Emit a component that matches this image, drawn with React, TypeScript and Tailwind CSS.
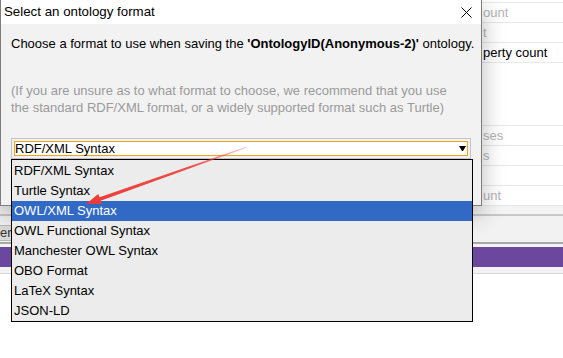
import React from "react";

const formats = [
  "RDF/XML Syntax",
  "Turtle Syntax",
  "OWL/XML Syntax",
  "OWL Functional Syntax",
  "Manchester OWL Syntax",
  "OBO Format",
  "LaTeX Syntax",
  "JSON-LD",
];

const Row = ({ text, dim }: { text?: string; dim?: boolean }) => (
  <div
    className={
      "h-[20px] border-b border-[#e8e8e8] pl-[483px] leading-[19px] " +
      (dim ? "text-[#b4b4b4]" : "text-black")
    }
  >
    {text}
  </div>
);

const App = () => {
  return (
    <div
      className="relative w-[563px] h-[358px] overflow-hidden bg-white text-[13px]"
      style={{ fontFamily: '"Liberation Sans", Arial, sans-serif' }}
    >
      {/* background app */}
      <div className="flex flex-col">
        <div className="pt-[2px]">
          <div className="border-t border-[#e8e8e8]">
            <Row text="ount" dim />
            <Row text="t" dim />
            <Row text="perty count" />
          </div>
        </div>
        <div className="h-[62px]" />
        <div className="border-t border-[#e8e8e8]">
          <Row text="ses" dim />
          <Row text="s" dim />
          <Row />
          <Row text="unt" dim />
        </div>
        <div className="h-[8px] bg-[#f4f4f4]" />
        <div className="h-[28px] border-t-2 border-[#c8c8c8] bg-[#f2f2f2] flex items-end pb-[1px]">
          <div className="h-[16px] w-[12px] overflow-hidden bg-[#d9d9d9] border-t border-b border-[#b8b8b8] leading-[14px] text-[#333] whitespace-nowrap">
            er
          </div>
        </div>
        <div className="h-[2px] bg-[#a8a8a8]" />
        <div className="h-[3px] bg-[#f2f2f2]" />
        <div className="h-[20px] bg-[#6b489e]" />
        <div className="h-[7px] bg-[#f2f2f2] border-b border-[#d8d8d8]" />
      </div>

      {/* dialog */}
      <div className="absolute left-0 top-0 w-[482px] h-[206px] flex flex-col border-l border-r border-b border-[#7d7d7d] bg-[#f2f2f2] shadow-[0_8px_22px_rgba(0,0,0,0.28)]">
        <div className="h-[24px] bg-white flex items-center justify-between pl-[3px] pr-[9px]">
          <span className="text-[13.3px] text-black">Select an ontology format</span>
          <svg width="11" height="11" viewBox="0 0 11 11">
            <path d="M0.5 0.5 L10.5 10.5 M10.5 0.5 L0.5 10.5" stroke="#000" strokeWidth="1" />
          </svg>
        </div>
        <div className="flex flex-col pl-[10px] pt-[12px]">
          <p className="leading-[15px] text-black whitespace-nowrap">
            Choose a format to use when saving the <b>'OntologyID(Anonymous-2)'</b> ontology.
          </p>
          <p className="mt-[31px] leading-[17px] text-[#9a9a9a]">
            (If you are unsure as to what format to choose, we recommend that you use
            <br />
            the standard RDF/XML format, or a widely supported format such as Turtle)
          </p>
          <div className="mt-[22px] w-[460px] h-[21px] border border-[#c4c4c4] p-[2px]">
            <div className="h-full border border-[#f0a41c] bg-white flex items-center justify-between pl-[0px] pr-[1px]">
              <span className="leading-[14px]">RDF/XML Syntax</span>
              <svg width="7" height="5" viewBox="0 0 7 5">
                <path d="M0 0 H7 L4 5 H3 Z" fill="#000" />
              </svg>
            </div>
          </div>
        </div>
      </div>

      {/* dropdown list */}
      <div className="absolute left-[11px] top-[159px] w-[462px] border border-black bg-[#ececec] flex flex-col pt-[1px]">
        {formats.map((f) => (
          <div
            key={f}
            className={
              "h-[20px] leading-[20px] pl-[2px] " +
              (f === "OWL/XML Syntax" ? "bg-[#316ac5] text-white" : "text-black")
            }
          >
            {f}
          </div>
        ))}
      </div>

      {/* red annotation arrow */}
      <svg className="absolute left-0 top-0" width="563" height="358" viewBox="0 0 563 358">
        <defs>
          <linearGradient id="fade" x1="247" y1="147" x2="86" y2="204" gradientUnits="userSpaceOnUse">
            <stop offset="0" stopColor="#ee3b36" stopOpacity="0.25" />
            <stop offset="0.35" stopColor="#ee3b36" stopOpacity="0.9" />
            <stop offset="1" stopColor="#ee3b36" stopOpacity="1" />
          </linearGradient>
        </defs>
        <polygon
          points="246.8,146.5 99.6,197.2 98.2,193.9 86,204 102,203.8 100.6,200.8 247.2,147.5"
          fill="url(#fade)"
        />
      </svg>
    </div>
  );
};

export default App;
